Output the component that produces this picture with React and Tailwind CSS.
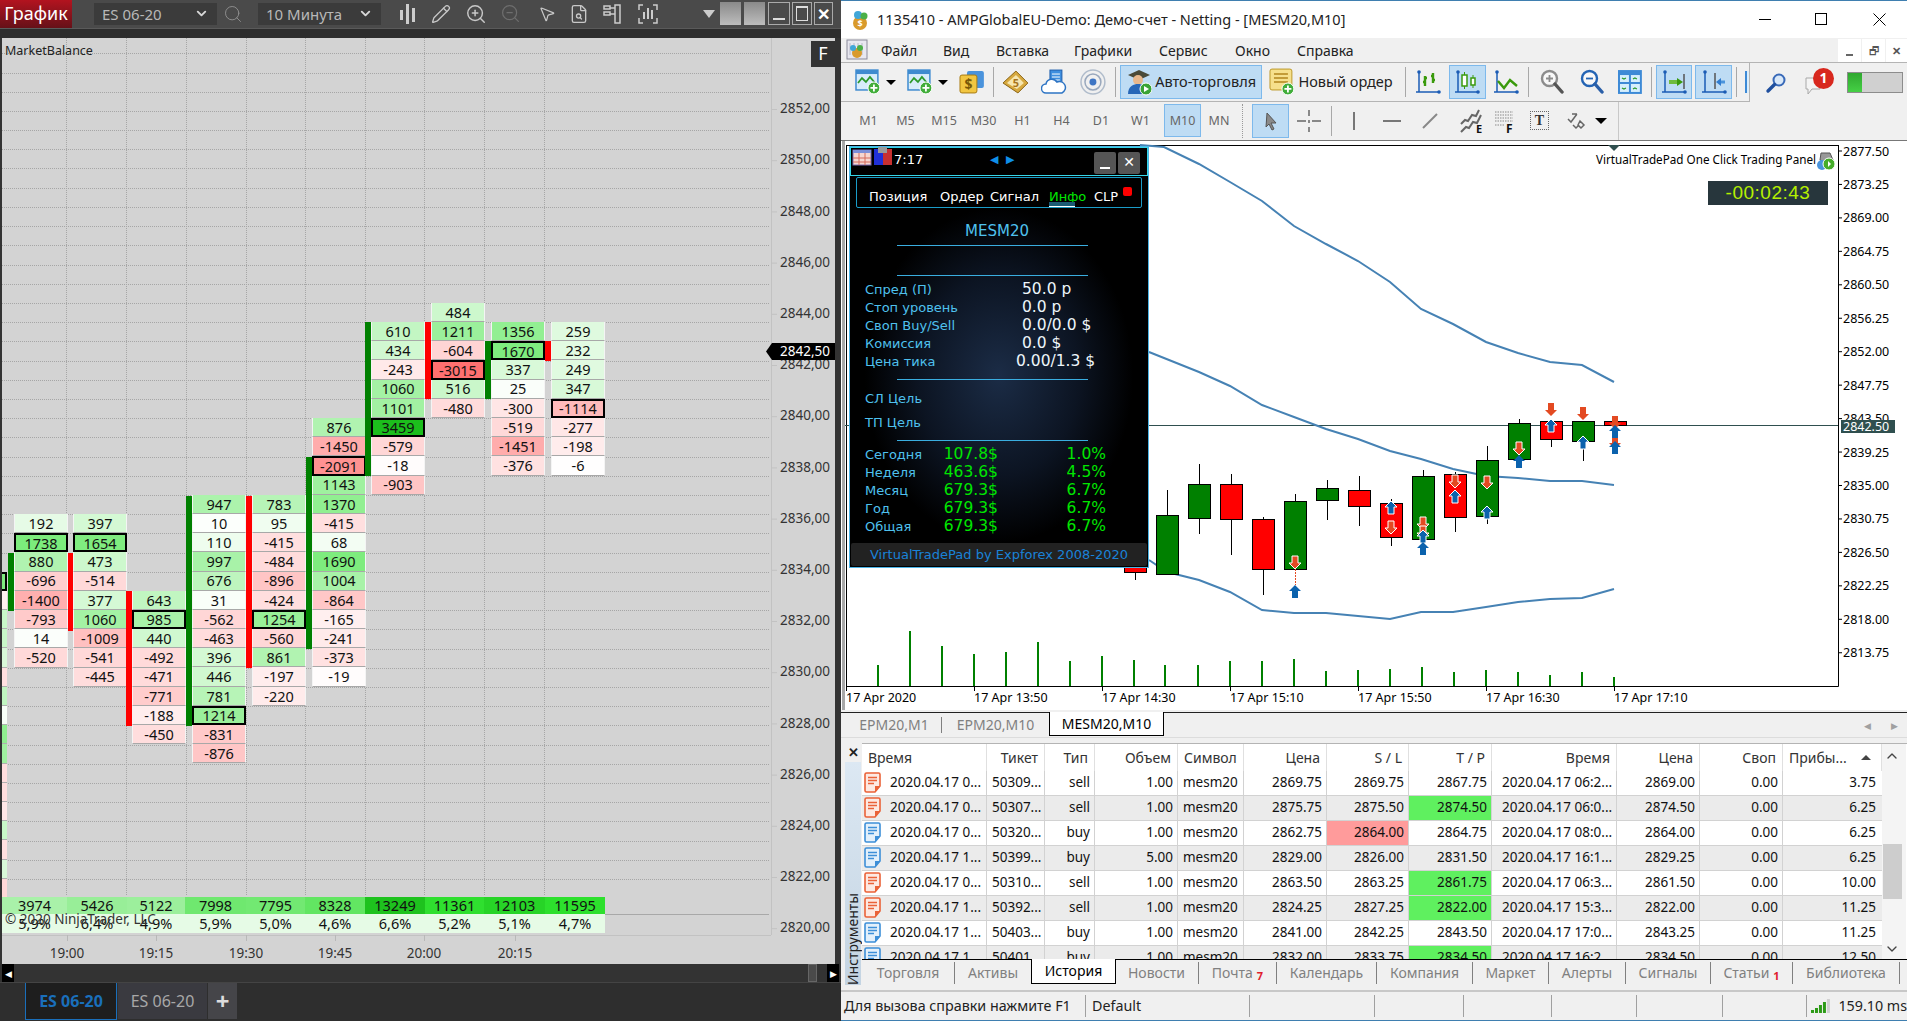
import { ChevronDown, ChevronUp, FileSearch, MousePointer2, Pencil, Search, ZoomIn, ZoomOut } from "lucide-react";

// ---------- data ----------
const footprint = [
  { x: 14, row: 11, bar: { x: 8, from: 553, to: 611, up: true }, cells: [192, 1738, 880, -696, -1400, -793, 14, -520], hi: 1 },
  { x: 73, row: 11, bar: { x: 68, from: 553, to: 631, up: false }, cells: [397, 1654, 473, -514, 377, 1060, -1009, -541, -445], hi: 1 },
  { x: 132, row: 15, bar: { x: 126, from: 591, to: 726, up: false }, cells: [643, 985, 440, -492, -471, -771, -188, -450], hi: 1 },
  { x: 192, row: 10, bar: { x: 186, from: 496, to: 726, up: true }, cells: [947, 10, 110, 997, 676, 31, -562, -463, 396, 446, 781, 1214, -831, -876], hi: 11 },
  { x: 252, row: 10, bar: { x: 246, from: 496, to: 668, up: false }, cells: [783, 95, -415, -484, -896, -424, 1254, -560, 861, -197, -220], hi: 6 },
  { x: 312, row: 6, bar: { x: 306, from: 457, to: 649, up: true }, cells: [876, -1450, -2091, 1143, 1370, -415, 68, 1690, 1004, -864, -165, -241, -373, -19], hi: 2 },
  { x: 371, row: 1, bar: { x: 365, from: 322, to: 476, up: true }, cells: [610, 434, -243, 1060, 1101, 3459, -579, -18, -903], hi: 5 },
  { x: 431, row: 0, bar: { x: 425, from: 322, to: 399, up: false }, cells: [484, 1211, -604, -3015, 516, -480], hi: 3 },
  { x: 491, row: 1, bar: { x: 485, from: 341, to: 399, up: true }, cells: [1356, 1670, 337, 25, -300, -519, -1451, -376], hi: 1 },
  { x: 551, row: 1, bar: { x: 545, from: 341, to: 361, up: false }, cells: [259, 232, 249, 347, -1114, -277, -198, -6], hi: 4 },
];

const edgeCells = ["#7eea7e", "#fff0f0", "#c8f7c8", "#c8f7c8", "#d8f8d8", "#ffe0e0", "#c0f5c0", "#f8fff8", "#90ee90", "#a0f0a0", "#ffdede", "#ffdede", "#ffe8e8", "#c8f7c8", "#ffe0e0", "#d8f8d8", "#ffd8d8"];

const volumes = [
  { w: 65, v: 3974, p: "5,9%", c: "#a9f1a9" },
  { w: 60, v: 5426, p: "6,4%", c: "#98ee98" },
  { w: 58, v: 5122, p: "4,9%", c: "#9cef9c" },
  { w: 61, v: 7998, p: "5,9%", c: "#6fe86f" },
  { w: 59, v: 7795, p: "5,0%", c: "#72e972" },
  { w: 60, v: 8328, p: "4,6%", c: "#62e662" },
  { w: 60, v: 13249, p: "6,6%", c: "#1ec21e" },
  { w: 59, v: 11361, p: "5,2%", c: "#2fdf2f" },
  { w: 61, v: 12103, p: "5,1%", c: "#27d427" },
  { w: 60, v: 11595, p: "4,7%", c: "#2de02d" },
];

const candles = [
  { x: 1135, top: 565, bot: 573, hi: 560, lo: 581, up: false },
  { x: 1167, top: 516, bot: 575, hi: 491, lo: 575, up: true },
  { x: 1199, top: 485, bot: 519, hi: 465, lo: 535, up: true },
  { x: 1231, top: 485, bot: 520, hi: 475, lo: 556, up: false },
  { x: 1263, top: 520, bot: 570, hi: 518, lo: 596, up: false },
  { x: 1295, top: 502, bot: 570, hi: 495, lo: 570, up: true },
  { x: 1327, top: 489, bot: 501, hi: 481, lo: 521, up: true },
  { x: 1359, top: 491, bot: 507, hi: 477, lo: 527, up: false },
  { x: 1391, top: 504, bot: 538, hi: 500, lo: 547, up: false },
  { x: 1423, top: 477, bot: 540, hi: 471, lo: 540, up: true },
  { x: 1455, top: 475, bot: 518, hi: 473, lo: 533, up: false },
  { x: 1487, top: 461, bot: 517, hi: 447, lo: 525, up: true },
  { x: 1519, top: 424, bot: 460, hi: 420, lo: 460, up: true },
  { x: 1551, top: 422, bot: 440, hi: 422, lo: 448, up: false },
  { x: 1583, top: 422, bot: 442, hi: 422, lo: 462, up: true },
  { x: 1615, top: 422, bot: 426, hi: 422, lo: 426, up: false },
];

const volumeBars = [[878, 666], [910, 632], [942, 647], [974, 655], [1006, 653], [1038, 643], [1070, 662], [1102, 657], [1134, 661], [1165, 666], [1198, 666], [1230, 662], [1262, 662], [1294, 660], [1326, 672], [1358, 671], [1390, 670], [1422, 668], [1454, 673], [1486, 671], [1518, 673], [1550, 676], [1582, 673], [1614, 678]];

const lineTop = "1140,146 1164,148 1199,165 1230,183 1262,202 1294,227 1326,245 1358,262 1390,283 1421,310 1453,325 1486,343 1518,354 1550,363 1582,366 1614,383";
const lineMid = "1149,353 1199,373 1230,387 1262,406 1294,418 1326,430 1358,440 1390,452 1421,460 1453,470 1486,477 1518,479 1550,482 1582,482 1614,486";
const lineLow = "1149,561 1167,573 1199,581 1230,593 1262,611 1294,614 1326,614 1358,617 1390,620 1421,613 1453,613 1486,608 1518,603 1550,600 1582,599 1614,590";

const downArrows = [[1295, 563, 1], [1391, 528, 1], [1423, 524, 1], [1423, 533, 1], [1455, 482, 1], [1487, 483, 1], [1519, 449, 1], [1551, 410, 0], [1583, 414, 0], [1615, 423, 0], [1615, 443, 0]];
const upArrows = [[1295, 593, 0], [1391, 509, 1], [1423, 538, 1], [1423, 550, 0], [1455, 498, 1], [1487, 514, 1], [1519, 463, 0], [1551, 427, 1], [1583, 444, 1], [1615, 433, 0], [1615, 449, 0]];

const columns = [
  ["Время", "l"], ["Тикет", "r"], ["Тип", "r"], ["Объем", "r"], ["Символ", "l"], ["Цена", "r"], ["S / L", "r"], ["T / P", "r"], ["Время", "r"], ["Цена", "r"], ["Своп", "r"], ["Прибы...", "l"],
];

const orders = [
  ["2020.04.17 0...", "50309...", "sell", "1.00", "2869.75", "2869.75", "2867.75", "2020.04.17 06:2...", "2869.00", "3.75"],
  ["2020.04.17 0...", "50307...", "sell", "1.00", "2875.75", "2875.50", "2874.50", "2020.04.17 06:0...", "2874.50", "6.25", "tp"],
  ["2020.04.17 0...", "50320...", "buy", "1.00", "2862.75", "2864.00", "2864.75", "2020.04.17 08:0...", "2864.00", "6.25", "sl"],
  ["2020.04.17 1...", "50399...", "buy", "5.00", "2829.00", "2826.00", "2831.50", "2020.04.17 16:1...", "2829.25", "6.25"],
  ["2020.04.17 0...", "50310...", "sell", "1.00", "2863.50", "2863.25", "2861.75", "2020.04.17 06:3...", "2861.50", "10.00", "tp"],
  ["2020.04.17 1...", "50392...", "sell", "1.00", "2824.25", "2827.25", "2822.00", "2020.04.17 15:3...", "2822.00", "11.25", "tp"],
  ["2020.04.17 1...", "50403...", "buy", "1.00", "2841.00", "2842.25", "2843.50", "2020.04.17 17:0...", "2843.25", "11.25"],
  ["2020.04.17 1...", "50401...", "buy", "1.00", "2832.00", "2833.75", "2834.50", "2020.04.17 16:2...", "2834.50", "12.50", "tp"],
];

const bottomTabs = [
  ["Торговля", 93], ["Активы", 77], ["История", 83, "active"], ["Новости", 84], ["Почта", 78, "7"], ["Календарь", 100], ["Компания", 96], ["Маркет", 76], ["Алерты", 77], ["Сигналы", 85], ["Статьи", 82, "1"], ["Библиотека", 107],
];

const timeframes = [["M1", 37], ["M5", 37], ["M15", 40], ["M30", 39], ["H1", 39], ["H4", 39], ["D1", 40], ["W1", 39]];

const menuItems = [["Файл", 62], ["Вид", 53], ["Вставка", 78], ["Графики", 85], ["Сервис", 76], ["Окно", 62], ["Справка", 70]];

function cellColor(v) {
  const a = Math.abs(v);
  if (v < 0) {
    const t = Math.pow(Math.min(a / 3015, 1), 0.75);
    const c = Math.round(255 - 143 * t);
    return `rgb(255,${c},${c})`;
  }
  if (a > 1800) {
    const t = Math.min((a - 1800) / 1660, 1);
    return `rgb(${Math.round(120 - 92 * t)},${Math.round(235 - 45 * t)},${Math.round(120 - 92 * t)})`;
  }
  const t = Math.pow(a / 1800, 0.75);
  const c = Math.round(255 - 135 * t);
  return `rgb(${c},${Math.round(255 - 20 * t)},${c})`;
}

// ---------- left: NinjaTrader ----------
function FootprintColumn({ col }) {
  return (
    <>
      <div
        className={`absolute w-[6px] ${col.bar.up ? "bg-[#008000]" : "bg-[#ff0000]"}`}
        style={{ left: col.bar.x - 2, top: col.bar.from - 38, height: col.bar.to - col.bar.from }}
      />
      <div className="absolute w-[54px] flex flex-col" style={{ left: col.x - 2, top: 264.9 + 19.2 * col.row }}>
        {col.cells.map((v, i) => (
          <div
            key={i}
            className={`h-[19.2px] flex items-center justify-center text-[14.5px] leading-none text-[#111] ${
              i === col.hi ? "border-2 border-black" : "border-b border-x border-x-[#f4f4f4] border-b-[#a8a8a8]"
            }`}
            style={{ backgroundColor: cellColor(v) }}
          >
            {v}
          </div>
        ))}
      </div>
    </>
  );
}

function NinjaChart() {
  const rows = [];
  for (let k = -13; k <= 30; k++) rows.push(302.9 + 19.2 * k);
  const prices = [];
  for (let p = 2852; p >= 2820; p -= 2) prices.push(p);
  const times = [["19:00", 67], ["19:15", 156], ["19:30", 246], ["19:45", 335], ["20:00", 424], ["20:15", 515]];
  return (
    <div className="relative h-[929px] bg-[#d3d3d3] ml-[2px] mr-[6px] overflow-hidden">
      <svg className="absolute inset-0 w-[833px] h-[929px]" viewBox="2 38 833 929">
        {rows.map((y) => (
          <line key={y} x1="2" x2="769" y1={Math.round(y) + 0.5} y2={Math.round(y) + 0.5} stroke="#a6a6a6" strokeDasharray="1 1" />
        ))}
        {[66, 126, 186, 246, 305, 365, 424, 484, 544].map((x) => (
          <line key={x} x1={x + 0.5} x2={x + 0.5} y1="38" y2="896" stroke="#a6a6a6" strokeDasharray="1 1" />
        ))}
        <line x1="771.5" x2="771.5" y1="38" y2="935" stroke="#c2c2c2" />
        <line x1="2" x2="771" y1="935.5" y2="935.5" stroke="#c2c2c2" />
        <line x1="605" x2="769" y1="914.5" y2="914.5" stroke="#a8a8a8" />
        {prices.map((p) => (
          <line key={p} x1="771" x2="777" y1={109.5 + 25.6 * (2852 - p)} y2={109.5 + 25.6 * (2852 - p)} stroke="#c2c2c2" />
        ))}
        {times.map(([t, x]) => (
          <line key={t} x1={x + 0.5} x2={x + 0.5} y1="935" y2="941" stroke="#b8b8b8" />
        ))}
      </svg>

      {edgeCells.map((c, i) => (
        <div
          key={i}
          className={`absolute left-0 w-[5px] h-[19.2px] ${i === 0 ? "border-y-2 border-r-2 border-black" : "border-b border-[#b0b0b0]"}`}
          style={{ top: 264.9 + 19.2 * (14 + i), backgroundColor: c }}
        />
      ))}

      {footprint.map((col) => (
        <FootprintColumn key={col.x} col={col} />
      ))}

      <div className="absolute left-0 top-[859px] flex text-[14.5px] text-[#111]">
        {volumes.map((c) => (
          <div key={c.v} className="flex flex-col" style={{ width: c.w }}>
            <div className="h-[17px] flex items-center justify-center leading-none" style={{ backgroundColor: c.c }}>
              {c.v}
            </div>
            <div className="h-[19px] flex items-center justify-center leading-none bg-[#e6fbe6]">{c.p}</div>
          </div>
        ))}
      </div>

      <div className="absolute left-[3px] top-[875px] text-[13.5px] leading-none text-[#333]">© 2020 NinjaTrader, LLC</div>
      <div className="absolute left-[3px] top-[7px] text-[12.5px] leading-none text-[#222]">MarketBalance</div>
      <div className="absolute left-[809px] top-[3px] w-[24px] h-[26px] bg-[#333] text-white text-[18px] flex items-center justify-center">F</div>

      {prices.map((p) => (
        <div
          key={p}
          className="absolute left-[778px] text-[13.5px] leading-none text-[#333]"
          style={{ top: 109.3 + 25.6 * (2852 - p) - 38 - 7 }}
        >
          {p},00
        </div>
      ))}

      <div className="absolute left-[764px] top-[305px] h-[17px] w-[69px] bg-black text-white text-[13.5px] leading-none flex items-center pl-[14px] [clip-path:polygon(6px_0,100%_0,100%_100%,6px_100%,0_50%)]">
        2842,50
      </div>

      {times.map(([t, x]) => (
        <div key={t} className="absolute w-[50px] -ml-[25px] text-center text-[13.5px] leading-none text-[#333] top-[909px]" style={{ left: x - 2 }}>
          {t}
        </div>
      ))}
    </div>
  );
}

function DarkSelect({ label }) {
  return (
    <div className="w-[123px] h-[22px] bg-[#3b3b3b] flex items-center justify-between pl-[8px] pr-[8px] text-[15px] text-[#b8b8b8]">
      <span>{label}</span>
      <ChevronDown size={15} strokeWidth={3} className="text-[#d8d8d8]" />
    </div>
  );
}

function NinjaToolbar() {
  return (
    <div className="h-[29px] flex items-center bg-[#4a4a4a] text-[#c8c8c8] border-b border-[#5a5a5a]">
      <div className="w-[72px] h-full bg-gradient-to-b from-[#b3131f] to-[#661018] text-white text-[18px] flex items-center justify-center">График</div>
      <div className="ml-[22px]"><DarkSelect label="ES 06-20" /></div>
      <Search size={20} strokeWidth={1} className="ml-[6px] text-[#999]" />
      <div className="ml-[15px]"><DarkSelect label="10 Минута" /></div>
      <svg className="ml-[17px]" width="20" height="24" viewBox="0 0 20 24" fill="#ccc">
        <rect x="2" y="8" width="3" height="10" />
        <rect x="8" y="2" width="3" height="20" />
        <rect x="14" y="6" width="3" height="14" />
      </svg>
      <Pencil size={20} strokeWidth={1.6} className="ml-[13px]" />
      <ZoomIn size={22} strokeWidth={1.6} className="ml-[14px]" />
      <ZoomOut size={21} strokeWidth={1.4} className="ml-[13px] text-[#6e6e6e]" />
      <MousePointer2 size={18} strokeWidth={1.6} className="ml-[17px]" />
      <FileSearch size={20} strokeWidth={1.6} className="ml-[13px]" />
      <svg className="ml-[14px]" width="20" height="20" viewBox="0 0 20 20" fill="none" stroke="#ccc" strokeWidth="1.5">
        <rect x="1" y="2" width="6" height="3" />
        <rect x="1" y="8" width="6" height="3" />
        <rect x="12" y="1" width="5" height="18" />
        <path d="M7 4h5M7 10h5" />
      </svg>
      <svg className="ml-[15px]" width="20" height="20" viewBox="0 0 20 20" fill="#ccc">
        <path d="M1 6V1h4M19 6V1h-4M1 14v5h4M19 14v5h-4" fill="none" stroke="#ccc" strokeWidth="1.5" />
        <rect x="5" y="8" width="2" height="7" />
        <rect x="9" y="4" width="2" height="11" />
        <rect x="13" y="6" width="2" height="9" />
      </svg>
      <div className="ml-[45px] w-0 h-0 border-x-[6px] border-x-transparent border-t-[8px] border-t-[#ccc]" />
      <div className="ml-[5px] w-[21px] h-[23px] bg-gradient-to-b from-[#8a8a8a] to-[#bdbdbd]" />
      <div className="ml-[3px] w-[21px] h-[23px] bg-gradient-to-b from-[#8a8a8a] to-[#bdbdbd]" />
      <div className="ml-[3px] w-[22px] h-[23px] border border-[#aaa] flex items-end justify-center pb-[4px]"><div className="w-[12px] h-[2px] bg-[#ddd]" /></div>
      <div className="ml-[2px] w-[20px] h-[23px] border border-[#aaa] p-[3px]"><div className="w-full h-full border border-[#ddd] border-t-2" /></div>
      <div className="ml-[2px] w-[19px] h-[23px] border border-[#aaa] text-white text-[16px] font-bold leading-none flex items-center justify-center">✕</div>
    </div>
  );
}

function NinjaPanel() {
  return (
    <div className="w-[841px] h-full flex flex-col bg-[#333]">
      <NinjaToolbar />
      <div className="h-[9px] bg-[#2d2d2d] shrink-0" />
      <NinjaChart />
      <div className="h-[19px] flex items-center justify-between px-[2px] border-b border-[#444]">
        <div className="w-[12px] h-[18px] bg-black text-white text-[9px] leading-none flex items-center justify-center">◀</div>
        <div className="flex items-center gap-[10px]">
          <div className="w-[9px] h-[18px] bg-[#4a4a4a] border border-[#666]" />
          <div className="w-[12px] h-[18px] bg-black text-white text-[9px] leading-none flex items-center justify-center">▶</div>
        </div>
      </div>
      <div className="flex-1 flex items-stretch pl-[25px] bg-[#2e2e2e] gap-[1px]">
        <div className="w-[92px] mb-[1px] flex items-center justify-center bg-[#1e1e1e] border-x border-b border-[#1a6fbb] text-[#1a6fbb] text-[16px] font-bold">ES 06-20</div>
        <div className="w-[89px] mb-[2px] flex items-center justify-center bg-[#3a3a40] text-[#a8a8a8] text-[16px]">ES 06-20</div>
        <div className="w-[29px] mb-[2px] flex items-center justify-center bg-[#454549] text-[#ddd] text-[24px] font-bold">+</div>
      </div>
    </div>
  );
}

// ---------- right: MetaTrader ----------
function Axes({ children, size = 26 }) {
  return (
    <svg width={size} height={size} viewBox="0 0 26 26" fill="none">
      <path d="M4 2v21M1 23h24" stroke="#1b5cb5" strokeWidth="1.5" />
      <circle cx="4" cy="3" r="1.8" fill="#1b5cb5" />
      <circle cx="24" cy="23" r="1.8" fill="#1b5cb5" />
      {children}
    </svg>
  );
}

const HollowBlueChart = ({ className = "" }) => (
  <svg className={className} width="26" height="26" viewBox="0 0 26 26" fill="none">
    <rect x="1" y="1" width="22" height="20" fill="#d8ecfb" stroke="#3f8bd0" strokeWidth="1.5" />
    <rect x="1" y="1" width="22" height="4" fill="#3f8bd0" />
    <path d="M3 14l4-5 4 4 4-5 6 7" stroke="#2c9a2c" strokeWidth="1.8" />
    <circle cx="19" cy="19" r="6" fill="#41ad3a" stroke="#fff" />
    <path d="M19 15.5v7M15.5 19h7" stroke="#fff" strokeWidth="1.8" />
  </svg>
);

const Caret = ({ className = "" }) => (
  <div className={`w-0 h-0 border-x-[5px] border-x-transparent border-t-[5px] border-t-black ${className}`} />
);

const Sep = ({ className = "" }) => <div className={`w-px h-[30px] bg-[#a8a8a8] ${className}`} />;

const Toggle = ({ className = "", children, w = 37 }) => (
  <div className={`h-[34px] bg-[#bedcf4] border border-[#7db9ec] flex items-center justify-center ${className}`} style={{ width: w }}>
    {children}
  </div>
);

function MagnifierIcon({ minus, blue }) {
  const ring = blue ? "#2464b4" : "#8c8c8c";
  return (
    <svg width="24" height="26" viewBox="0 0 24 26" fill="none">
      <circle cx="9.5" cy="9.5" r="7.5" fill="#f8f8f8" stroke={ring} strokeWidth="2.4" />
      <path d={minus ? "M6 9.5h7" : "M6 9.5h7M9.5 6v7"} stroke={ring} strokeWidth="1.8" />
      <path d="M15 15l7 8" stroke={blue ? "#2a5fa8" : "#555"} strokeWidth="3.4" strokeLinecap="round" />
    </svg>
  );
}

function MainToolbar() {
  return (
    <div className="h-[41px] flex items-center border-t border-[#b4b4b4] bg-[#f0f0f0]">
      <div className="w-[909px] h-full flex items-center border-b border-r border-[#b4b4b4] pl-[14px]">
        <HollowBlueChart />
        <Caret className="ml-[5px]" />
        <HollowBlueChart className="ml-[11px]" />
        <Caret className="ml-[5px]" />
        <svg className="ml-[11px]" width="26" height="26" viewBox="0 0 26 26">
          <rect x="8" y="2" width="17" height="17" rx="2" fill="#4a93dc" />
          <rect x="1" y="6" width="17" height="18" rx="2" fill="#f2c641" stroke="#a87b12" />
          <text x="9.5" y="20" textAnchor="middle" className="text-[14px] font-bold" fill="#7a5808">$</text>
        </svg>
        <Sep className="ml-[8px]" />
        <svg className="ml-[8px]" width="27" height="26" viewBox="0 0 27 26">
          <path d="M1 14L14 2l12 12-10 10z" fill="#d7a93f" stroke="#8a6413" />
          <path d="M5 14L14 6l8 8-7 6z" fill="#f7e7b0" />
          <text x="14" y="18" textAnchor="middle" className="text-[11px] font-bold" fill="#a8741a">5</text>
        </svg>
        <svg className="ml-[13px]" width="26" height="26" viewBox="0 0 26 26">
          <rect x="9" y="1" width="12" height="15" fill="#3f8fdf" stroke="#1d5dab" />
          <path d="M11 5h8M11 8h8M11 11h8" stroke="#fff" />
          <path d="M5 24a4.5 4.5 0 0 1 0-9 6 6 0 0 1 11-2 5.5 5.5 0 0 1 5 11z" fill="#fff" stroke="#2d74c4" strokeWidth="1.5" />
        </svg>
        <svg className="ml-[13px]" width="26" height="26" viewBox="0 0 26 26" fill="none">
          <circle cx="13" cy="13" r="12" stroke="#b0bccb" strokeWidth="1.5" />
          <circle cx="13" cy="13" r="8" stroke="#99a8bd" strokeWidth="1.5" />
          <circle cx="13" cy="13" r="3.5" fill="#3f76c4" />
        </svg>
        <Sep className="ml-[9px]" />
        <div className="ml-[4px] w-[142px] h-[34px] bg-[#bedcf4] border border-[#7db9ec] flex items-center pl-[5px] text-[14.5px] text-[#222] gap-[3px] whitespace-nowrap">
          <svg width="26" height="28" viewBox="0 0 26 28" className="shrink-0">
            <path d="M2 7l11-5 11 5-11 5z" fill="#4a4a38" />
            <circle cx="12" cy="12" r="5" fill="#e8b88c" />
            <path d="M2 26c0-8 6-10 10-10s9 2 10 10z" fill="#2767b8" />
            <circle cx="20" cy="21" r="6" fill="#3aa336" stroke="#fff" />
            <path d="M18 18l5 3-5 3z" fill="#fff" />
          </svg>
          <span>Авто-торговля</span>
        </div>
        <svg className="ml-[7px]" width="26" height="28" viewBox="0 0 26 28">
          <rect x="1" y="1" width="22" height="21" rx="2" fill="#f6e08c" stroke="#bc9828" />
          <path d="M5 6h14M5 10h14M5 14h14" stroke="#b3851c" strokeWidth="1.5" />
          <circle cx="19" cy="21" r="6" fill="#41ad3a" stroke="#fff" />
          <path d="M19 17.5v7M15.5 21h7" stroke="#fff" strokeWidth="1.8" />
        </svg>
        <span className="ml-[4px] text-[14.5px] text-[#222] whitespace-nowrap">Новый ордер</span>
        <Sep className="ml-[12px]" />
        <div className="ml-[9px]">
          <Axes><path d="M10 7v10M8 13h2M10 9h2M18 4v10M16 7h2M18 11h2" stroke="#3a9a0c" strokeWidth="2.4" /></Axes>
        </div>
        <Toggle className="ml-[8px]">
          <Axes><rect x="8" y="6" width="5" height="11" fill="#fff" stroke="#3a9a0c" strokeWidth="1.5" /><rect x="17" y="9" width="4" height="7" fill="#fff" stroke="#3a9a0c" strokeWidth="1.5" /><path d="M10.5 3v3M10.5 17v3M19 6v3M19 16v3" stroke="#3a9a0c" /></Axes>
        </Toggle>
        <div className="ml-[7px]">
          <Axes><path d="M5 12l6 7 6-8 7 6" stroke="#3a9a0c" strokeWidth="2.4" /></Axes>
        </div>
        <Sep className="ml-[9px]" />
        <div className="ml-[11px]"><MagnifierIcon /></div>
        <div className="ml-[16px]"><MagnifierIcon minus blue /></div>
        <svg className="ml-[13px]" width="26" height="26" viewBox="0 0 26 26">
          <rect x="1" y="1" width="24" height="24" fill="#3d8ad6" />
          <rect x="3" y="6" width="9" height="7" fill="#d5eefc" />
          <rect x="14" y="6" width="9" height="7" fill="#d5eefc" />
          <rect x="3" y="15" width="9" height="8" fill="#d5eefc" />
          <rect x="14" y="15" width="9" height="8" fill="#d5eefc" />
          <path d="M5 9l2 1 2-1M16 10l2-1 2 1M5 19l2 1 2-1M16 20l2-1 2 1" stroke="#2d9a2d" strokeWidth="1.3" fill="none" />
        </svg>
        <Sep className="ml-[9px]" />
        <Toggle className="ml-[4px]" w={36}>
          <Axes><path d="M8 13h10" stroke="#6fbb3e" strokeWidth="4" /><path d="M16 9l6 4-6 4z" fill="#3a9a0c" /><path d="M23 5v15" stroke="#555" strokeWidth="1.5" /></Axes>
        </Toggle>
        <Toggle className="ml-[3px]">
          <Axes><path d="M14 4v16" stroke="#555" strokeWidth="1.5" /><path d="M24 13h-5" stroke="#4a94dc" strokeWidth="3" /><path d="M20 9l-5 4 5 4z" fill="#2f7cd0" /></Axes>
        </Toggle>
        <Sep className="ml-[4px]" />
        <div className="ml-[8px] w-[4px] h-[22px] bg-[#dbeefc] border-l-2 border-[#3d8ad6]" />
      </div>
      <svg className="ml-[15px]" width="22" height="22" viewBox="0 0 22 22" fill="none">
        <circle cx="14" cy="8" r="5.5" fill="#d9e8f8" stroke="#3869b8" strokeWidth="2" />
        <path d="M9.5 12.5L3 19" stroke="#1f4f9e" strokeWidth="3.4" strokeLinecap="round" />
      </svg>
      <div className="relative ml-[17px] w-[30px] h-[30px]">
        <svg className="absolute left-0 top-[8px]" width="18" height="20" viewBox="0 0 18 20" fill="#f4f4f4" stroke="#a8a8a8">
          <path d="M2 2h14v11H8l-4 5v-5H2z" />
        </svg>
        <div className="absolute right-0 top-0 w-[21px] h-[21px] rounded-full bg-[#d8281e] text-white text-[14px] font-bold leading-none flex items-center justify-center">1</div>
      </div>
      <div className="ml-[13px] w-[56px] h-[21px] bg-[#d0d0d0] border border-[#8c8c8c]">
        <div className="w-[14px] h-full bg-gradient-to-b from-[#2fa82f] to-[#45d045]" />
      </div>
    </div>
  );
}

function PeriodToolbar() {
  return (
    <div className="h-[39px] flex items-center bg-[#f0f0f0] border-b border-[#777]">
      <div className="w-[778px] h-full flex items-center pl-[9px] border-r border-[#c8c8c8] text-[12.5px] text-[#666]">
        {timeframes.map(([t, w]) => (
          <div key={t} className="text-center" style={{ width: w }}>{t}</div>
        ))}
        <div className="ml-[4px] w-[37px] h-[33px] bg-[#bedcf4] border border-[#7db9ec] flex items-center justify-center">M10</div>
        <div className="w-[40px] text-center -ml-[2px]">MN</div>
        <div className="ml-[3px] w-px h-[34px] border-l border-dotted border-[#999]" />
        <Toggle className="ml-[9px]">
          <svg width="18" height="20" viewBox="0 0 18 20"><path d="M5 2l9 10h-5l3 6-2 1-3-6-3 3z" fill="#8a8a8a" stroke="#555" /></svg>
        </Toggle>
        <svg className="ml-[7px]" width="26" height="26" viewBox="0 0 26 26" stroke="#666" strokeWidth="1.5"><path d="M13 2v6M13 12v3M13 19v5M1 13h9M16 13h9" /></svg>
        <div className="ml-[9px] w-px h-[30px] bg-[#a8a8a8]" />
        <div className="ml-[21px] w-[2px] h-[18px] bg-[#777]" />
        <div className="ml-[28px] w-[18px] h-[2px] bg-[#777]" />
        <svg className="ml-[20px]" width="18" height="18" viewBox="0 0 18 18" stroke="#888" strokeWidth="2"><path d="M2 16L16 2" /></svg>
        <svg className="ml-[20px]" width="26" height="26" viewBox="0 0 26 26" fill="none" stroke="#666" strokeWidth="2">
          <path d="M2 24l5-5 3 1 4-6 4 1 4-8M2 16l4-4 3 1 4-6 4 1 3-6" />
          <text x="17" y="25" className="text-[11px] font-bold" stroke="none" fill="#111">E</text>
        </svg>
        <svg className="ml-[8px]" width="26" height="26" viewBox="0 0 26 26">
          <path d="M2 4h18M2 7h18M2 10h18M2 13h18" stroke="#888" strokeDasharray="1.5 1" fill="none" />
          <path d="M2 17h10" stroke="#888" strokeDasharray="1.5 1" />
          <text x="13" y="25" className="text-[12px] font-bold" fill="#111">F</text>
        </svg>
        <div className="ml-[11px] w-[19px] h-[19px] border border-dotted border-[#666] flex items-center justify-center text-[#333] text-[14px] font-bold font-['Liberation_Serif',serif]">T</div>
        <svg className="ml-[17px]" width="20" height="20" viewBox="0 0 20 20" fill="none" stroke="#666" strokeWidth="1.5"><path d="M2 8l3 3 6-8M6 3h5M7 14l3 3 2-2M14 10l4 4-3 3-3-3z" /></svg>
        <Caret className="ml-[9px] border-x-[6px] border-t-[6px]" />
      </div>
    </div>
  );
}

function Arrow({ x, y, up, outline }) {
  const s = up ? 1 : -1;
  const points = [[0, -7], [6, -1], [3, -1], [3, 6], [-3, 6], [-3, -1], [-6, -1]]
    .map(([dx, dy]) => `${x + dx},${y + dy * s}`)
    .join(" ");
  return <polygon points={points} fill={up ? "#0b62ad" : "#e34a22"} stroke={outline ? "#fff" : "none"} strokeWidth="1" />;
}

function TradeChart() {
  const priceTicks = ["2877.50", "2873.25", "2869.00", "2864.75", "2860.50", "2856.25", "2852.00", "2847.75", "2843.50", "2839.25", "2835.00", "2830.75", "2826.50", "2822.25", "2818.00", "2813.75"];
  const timeTicks = [["17 Apr 2020", 846], ["17 Apr 13:50", 974], ["17 Apr 14:30", 1102], ["17 Apr 15:10", 1230], ["17 Apr 15:50", 1358], ["17 Apr 16:30", 1486], ["17 Apr 17:10", 1614]];
  return (
    <svg className="absolute left-0 top-0 w-[1066px] h-[569px]" viewBox="841 142 1066 569">
      <rect x="842" y="142" width="3" height="569" fill="#a8a8a8" />
      <path d="M846.5 146V687.5H1838.5V146" fill="none" stroke="#000" />
      <path d="M846 146.5H1838" stroke="#000" />
      <line x1="845" x2="1838" y1="426.5" y2="426.5" stroke="#2f4f4f" />
      <polygon points="1608,146 1620,146 1614,152" fill="#2f4f4f" />
      {volumeBars.map(([x, y]) => (
        <rect key={x} x={x - 1} y={y} width="2" height={687 - y} fill="#008000" />
      ))}
      <polyline points={lineTop} fill="none" stroke="#4682b4" strokeWidth="2" />
      <polyline points={lineMid} fill="none" stroke="#4682b4" strokeWidth="2" />
      <polyline points={lineLow} fill="none" stroke="#4682b4" strokeWidth="2" />
      {candles.map((c) => (
        <g key={c.x}>
          <line x1={c.x + 0.5} x2={c.x + 0.5} y1={c.hi} y2={c.lo} stroke="#000" />
          <rect x={c.x - 11 + 0.5} y={c.top + 0.5} width="22" height={c.bot - c.top} fill={c.up ? "#008000" : "#ff0000"} stroke="#000" />
        </g>
      ))}
      <line x1="1295.5" x2="1295.5" y1="570" y2="586" stroke="#e34a22" strokeDasharray="2 1" />
      {downArrows.map(([x, y, o]) => <Arrow key={`d${x}${y}`} x={x} y={y} outline={o} />)}
      {upArrows.map(([x, y, o]) => <Arrow key={`u${x}${y}`} x={x} y={y} up outline={o} />)}
      {priceTicks.map((p, i) => (
        <g key={p}>
          <line x1="1838" x2="1842" y1={152 + 33.45 * i} y2={152 + 33.45 * i} stroke="#000" />
          <text x="1843" y={156.5 + 33.45 * i} className="text-[12.5px]" fill="#000">{p}</text>
        </g>
      ))}
      <rect x="1841" y="421" width="54" height="13" fill="#2f4f4f" />
      <text x="1843" y="432" className="text-[12.5px]" fill="#fff">2842.50</text>
      {timeTicks.map(([t, x]) => (
        <g key={t}>
          <line x1={x + 0.5} x2={x + 0.5} y1="687" y2="692" stroke="#000" />
          <text x={x} y="703" className="text-[12.5px]" fill="#000">{t}</text>
        </g>
      ))}
    </svg>
  );
}

function InfoRow({ label, value, valueLeft }) {
  return (
    <div className="flex h-[18px] items-center">
      <div className="w-[157px] text-[13px] text-[#4fc1ee]">{label}</div>
      <div className="text-[15.5px] text-[#eef6fb]" style={{ marginLeft: valueLeft }}>{value}</div>
    </div>
  );
}

function StatRow({ label, money, pct }) {
  return (
    <div className="flex h-[18px] items-center">
      <div className="w-[60px] text-[13px] text-[#4fc1ee]">{label}</div>
      <div className="w-[73px] text-right text-[15.5px] text-[#00e600]">{money}</div>
      <div className="w-[108px] text-right text-[15.5px] text-[#00e600]">{pct}</div>
    </div>
  );
}

function TradePad() {
  const rule = "h-px w-[191px] ml-[32px] bg-[#3aaee0]";
  return (
    <div className="absolute left-[8px] top-[5px] w-[300px] h-[422px] bg-black border border-[#4bb4e6] font-['DejaVu_Sans',sans-serif] flex flex-col">
      <div className="relative h-[29px] shrink-0 border border-[#35d6e8] flex items-center text-white text-[13px]">
        <svg className="absolute left-[1px] -top-[1px]" width="42" height="22" viewBox="0 0 42 22">
          <rect x="1" y="3" width="18" height="15" fill="#f5d6d0" stroke="#7b6bb0" />
          <rect x="1" y="3" width="18" height="3" fill="#7b8fd8" />
          <path d="M7 6v12M13 6v12M1 11h18M1 15h18" stroke="#d46a5a" />
          <rect x="22" y="2" width="9" height="16" fill="#2030d8" />
          <rect x="31" y="2" width="9" height="16" fill="#c83030" />
          <rect x="26" y="0" width="9" height="6" fill="#9a9a9a" />
        </svg>
        <span className="absolute left-[43px] top-[2px]">7:17</span>
        <span className="absolute left-[139px] top-[6px] text-[#0f8fe8] text-[11px] leading-none">◀</span>
        <span className="absolute left-[155px] top-[6px] text-[#0f8fe8] text-[11px] leading-none">▶</span>
        <div className="absolute left-[243px] top-[4px] w-[22px] h-[22px] rounded-[2px] bg-[#555] flex items-end justify-center pb-[5px]"><div className="w-[10px] h-[2px] bg-white" /></div>
        <div className="absolute left-[267px] top-[4px] w-[22px] h-[22px] rounded-[2px] bg-[#555] text-white text-[14px] font-bold flex items-center justify-center">✕</div>
      </div>
      <div className="relative h-[31px] mx-[6px] mt-[1px] shrink-0 border border-[#1a9cc8] rounded-[2px] text-[13px] text-white">
        <span className="absolute left-[12px] top-[9px]">Позиция</span>
        <span className="absolute left-[83px] top-[9px]">Ордер</span>
        <span className="absolute left-[133px] top-[9px]">Сигнал</span>
        <span className="absolute left-[192px] top-[9px] text-[#00e600]">Инфо</span>
        <div className="absolute left-[192px] bottom-0 w-[26px] h-[1px] bg-white" />
        <div className="absolute left-[192px] bottom-[1px] w-[26px] h-[4px] bg-[#1a5a74]" />
        <span className="absolute left-[237px] top-[9px]">CLP</span>
        <div className="absolute left-[266px] top-[9px] w-[9px] h-[9px] rounded-[2px] bg-[#ff0000]" />
      </div>
      <div className="flex-1 bg-[radial-gradient(ellipse_45%_50%_at_50%_50%,#1b2c46_0%,#0c1422_60%,#000_100%)] px-[15px] flex flex-col">
        <div className="text-center text-[15px] leading-none text-[#4fc1ee] mt-[16px] pr-[4px]">MESM20</div>
        <div className={`${rule} mt-[6px]`} />
        <div className={`${rule} mt-[29px]`} />
        <div className="mt-[5px] text-nowrap">
          <InfoRow label="Спред (П)" value="50.0 p" valueLeft="0px" />
          <InfoRow label="Стоп уровень" value="0.0 p" valueLeft="0px" />
          <InfoRow label="Своп Buy/Sell" value="0.0/0.0 $" valueLeft="0px" />
          <InfoRow label="Комиссия" value="0.0 $" valueLeft="0px" />
          <InfoRow label="Цена тика" value="0.00/1.3 $" valueLeft="-6px" />
        </div>
        <div className={`${rule} mt-[8px]`} />
        <div className="text-[13px] text-[#4fc1ee] mt-[10px] leading-[18px]">СЛ Цель</div>
        <div className="text-[13px] text-[#4fc1ee] mt-[6px] leading-[18px]">ТП Цель</div>
        <div className={`${rule} mt-[8px]`} />
        <div className="mt-[5px]">
          <StatRow label="Сегодня" money="107.8$" pct="1.0%" />
          <StatRow label="Неделя" money="463.6$" pct="4.5%" />
          <StatRow label="Месяц" money="679.3$" pct="6.7%" />
          <StatRow label="Год" money="679.3$" pct="6.7%" />
          <StatRow label="Общая" money="679.3$" pct="6.7%" />
        </div>
      </div>
      <div className="h-[23px] shrink-0 mx-[1px] mb-[1px] bg-[#222] rounded-[2px] text-center text-[13px] leading-[23px] text-[#1a82d8]">VirtualTradePad by Expforex 2008-2020</div>
    </div>
  );
}

function ChartArea() {
  return (
    <div className="relative h-[569px] bg-white overflow-hidden shrink-0">
      <TradeChart />
      <TradePad />
      <div className="absolute left-[755px] top-[13px] text-[11.7px] leading-none text-black whitespace-nowrap">VirtualTradePad One Click Trading Panel</div>
      <svg className="absolute left-[975px] top-[8px]" width="20" height="22" viewBox="0 0 20 22">
        <path d="M5 4h9l3 7-7 3-6-3z" fill="#999" stroke="#555" />
        <circle cx="6" cy="16" r="5" fill="#4a94dc" />
        <circle cx="13" cy="15" r="6" fill="#46ad2a" stroke="#fff" />
        <path d="M12 12v6l3-3z" fill="#fff" />
      </svg>
      <div className="absolute left-[867px] top-[40px] w-[120px] h-[24px] bg-[#27363c] text-[#b6f000] text-[19px] leading-none tracking-[0.5px] font-['Liberation_Sans',sans-serif] flex items-center justify-center">-00:02:43</div>
    </div>
  );
}

function ChartTabs() {
  return (
    <div className="h-[31px] mt-[2px] bg-[#f0f0f0] border-t border-[#222] shrink-0 flex items-start relative text-[14px] -mb-[2px]">
      <div className="w-[99px] ml-[2px] pl-[4px] mt-[4px] h-[16px] flex items-center justify-center text-[#808080] border-r border-[#808080]">EPM20,M1</div>
      <div className="w-[107px] mt-[4px] h-[16px] flex items-center justify-center text-[#808080]">EPM20,M10</div>
      <div className="w-[115px] h-[24px] -mt-px bg-white border-x border-b border-black flex items-center justify-center text-black">MESM20,M10</div>
      <div className="absolute right-[36px] top-[8px] text-[#a0a0a0] text-[9px] leading-none">◀</div>
      <div className="absolute right-[9px] top-[8px] text-[#a0a0a0] text-[9px] leading-none">▶</div>
      <div className="absolute left-0 right-0 top-[24px] h-px bg-[#dcdcdc]" />
    </div>
  );
}

function DocIcon({ sell }) {
  const c = sell ? "#ea6238" : "#3d8fd8";
  const f = sell ? "#fde9e2" : "#e3f0fb";
  return (
    <svg width="17" height="21" viewBox="0 0 17 21" className="shrink-0">
      <path d="M2.5 1h12a1.5 1.5 0 0 1 1.5 1.5V14l-5 6H2.5A1.5 1.5 0 0 1 1 18.5v-16A1.5 1.5 0 0 1 2.5 1z" fill={f} stroke={c} strokeWidth="1.6" />
      <path d="M4 5.5h9M4 8.5h9M4 11.5h6" stroke={c} strokeWidth="1.3" />
      <path d="M16 14h-5v6z" fill={c} />
    </svg>
  );
}

const tableGrid = "grid grid-cols-[125px_58px_50px_83px_66px_83px_82px_83px_125px_83px_83px_99px]";

function OrderRow({ row, index }) {
  const [time, ticket, type, vol, price, sl, tp, closeTime, close, profit, hit] = row;
  const cell = "h-[25px] border-r border-b border-[#d2d2d2] flex items-center justify-end pr-[4px] overflow-hidden whitespace-nowrap";
  const bg = index % 2 ? "bg-[#ebebeb]" : "bg-white";
  return (
    <div className={`${tableGrid} ${bg} text-[13.5px] text-[#111]`}>
      <div className={`${cell} !justify-start pl-[2px] gap-[9px]`}>
        <DocIcon sell={type === "sell"} />
        <span>{time}</span>
      </div>
      <div className={`${cell} !justify-start pl-[5px]`}>{ticket}</div>
      <div className={cell}>{type}</div>
      <div className={cell}>{vol}</div>
      <div className={`${cell} !justify-start pl-[5px]`}>mesm20</div>
      <div className={cell}>{price}</div>
      <div className={`${cell} ${hit === "sl" ? "bg-[#ff9b9b]" : ""}`}>{sl}</div>
      <div className={`${cell} ${hit === "tp" ? "bg-[#5ff05f]" : ""}`}>{tp}</div>
      <div className={`${cell} !justify-start pl-[10px]`}>{closeTime}</div>
      <div className={cell}>{close}</div>
      <div className={cell}>0.00</div>
      <div className={`${cell} border-r-0 pr-[6px]`}>{profit}</div>
    </div>
  );
}

function OrdersTable() {
  return (
    <div className="h-[216px] flex border-t border-[#b4b4b4] overflow-hidden bg-white">
      <div className="w-[1020px] overflow-hidden">
        <div className={`${tableGrid} h-[27px] text-[14px] text-[#333]`}>
          {columns.map(([name, align], i) => (
            <div
              key={i}
              className={`border-r border-[#e0e0e0] flex items-center overflow-hidden whitespace-nowrap ${align === "l" ? "justify-start pl-[6px]" : "justify-end pr-[6px]"}`}
            >
              {name}
              {i === 11 && <div className="ml-[14px] w-0 h-0 border-x-[5px] border-x-transparent border-b-[5px] border-b-[#444]" />}
            </div>
          ))}
        </div>
        {orders.map((row, i) => (
          <OrderRow key={i} row={row} index={i} />
        ))}
      </div>
      <div className="w-[24px] bg-[#f4f4f4] flex flex-col items-center relative">
        <ChevronUp size={16} strokeWidth={2} className="mt-[4px] -ml-[4px] text-[#444]" />
        <div className="absolute left-[1px] top-[100px] w-[19px] h-[55px] bg-[#cdcdcd]" />
        <ChevronDown size={16} strokeWidth={2} className="mt-auto mb-[2px] -ml-[4px] text-[#444]" />
      </div>
    </div>
  );
}

function BottomTabs() {
  return (
    <div className="h-[31px] bg-[#f0f0f0] flex items-start text-[14px] border-t border-black">
      {bottomTabs.map(([label, w, extra]) =>
        extra === "active" ? (
          <div key={label} className="h-[25px] -mt-px -mx-px bg-white border-x border-b border-black flex items-center justify-center text-black" style={{ width: w + 2 }}>
            {label}
          </div>
        ) : (
          <div key={label} className="h-[22px] mt-[2px] flex items-center justify-center text-[#808080] border-r border-[#808080]" style={{ width: w }}>
            <span>{label}</span>
            {extra && <span className="ml-[4px] mt-[6px] text-[11px] leading-none font-bold text-[#e0202c]">{extra}</span>}
          </div>
        )
      )}
    </div>
  );
}

function StatusBar() {
  const widths = [165, 125, 89, 89, 85, 86, 85];
  return (
    <div className="h-[31px] flex items-center bg-[#f0f0f0] border-t-2 border-[#c8c8c8] text-[14.3px] text-[#222]">
      <div className="w-[246px] h-[22px] pl-[3px] flex items-center border-r border-[#a0a0a0] whitespace-nowrap">Для вызова справки нажмите F1</div>
      {widths.map((w, i) => (
        <div key={i} className="h-[22px] pl-[6px] flex items-center border-r border-[#a0a0a0]" style={{ width: w }}>
          {i === 0 && "Default"}
        </div>
      ))}
      <svg className="ml-[4px]" width="20" height="16" viewBox="0 0 20 16" fill="#2c9a16">
        <rect x="0" y="12" width="3" height="3" />
        <rect x="4" y="10" width="3" height="5" />
        <rect x="8" y="7" width="3" height="8" />
        <rect x="12" y="4" width="3" height="11" />
        <rect x="16" y="1" width="3" height="14" fill="#d0d0d0" />
      </svg>
      <span className="ml-[7px] whitespace-nowrap">159.10 ms</span>
    </div>
  );
}

function MetaTraderWindow() {
  return (
    <div className="w-[1066px] h-full flex flex-col bg-[#f0f0f0] border-y border-[#3f7fb0] overflow-hidden">
      <div className="h-[37px] bg-white flex items-center relative shrink-0">
        <svg className="ml-[10px]" width="18" height="20" viewBox="0 0 18 20">
          <circle cx="9" cy="13" r="7" fill="#d99a2b" />
          <circle cx="7" cy="5" r="4" fill="#41a6d8" />
          <circle cx="13" cy="6" r="3.5" fill="#4bb048" />
          <text x="9" y="17" textAnchor="middle" className="text-[9px] font-bold" fill="#fff">$</text>
        </svg>
        <span className="ml-[8px] text-[14.5px] text-[#222] whitespace-nowrap">1135410 - AMPGlobalEU-Demo: Демо-счет - Netting - [MESM20,M10]</span>
        <div className="absolute left-[918px] top-[18px] w-[12px] h-px bg-black" />
        <div className="absolute left-[974px] top-[12px] w-[12px] h-[12px] border border-black" />
        <svg className="absolute left-[1032px] top-[12px]" width="13" height="13" viewBox="0 0 13 13" stroke="#000"><path d="M.5.5l12 12M12.5.5l-12 12" /></svg>
      </div>
      <div className="h-[24px] flex items-center text-[14px] text-[#222] relative shrink-0">
        <svg className="ml-[5px] mr-[13px]" width="22" height="22" viewBox="0 0 22 22">
          <rect x="1" y="1" width="20" height="19" fill="#e8e8f0" stroke="#8a8a9a" />
          <path d="M4 4v12M8 4v12M12 4v12M16 4v12" stroke="#b8b8c8" />
          <circle cx="11" cy="14" r="5" fill="#d99a2b" />
          <circle cx="7" cy="9" r="3" fill="#41a6d8" />
          <circle cx="14" cy="9" r="3" fill="#4bb048" />
        </svg>
        {menuItems.map(([label, w]) => (
          <div key={label} style={{ width: w }}>{label}</div>
        ))}
        <div className="ml-auto flex gap-[1px] text-[#555] text-[11px]">
          <div className="w-[23px] h-[23px] bg-white flex items-end justify-center pb-[6px]"><div className="w-[7px] h-[2px] bg-[#666]" /></div>
          <div className="w-[23px] h-[23px] bg-white flex items-center justify-center leading-none">🗗</div>
          <div className="w-[21px] h-[23px] bg-white flex items-center justify-center font-bold leading-none">✕</div>
        </div>
      </div>
      <MainToolbar />
      <PeriodToolbar />
      <ChartArea />
      <ChartTabs />
      <div className="h-[247px] flex shrink-0 mt-[2px]">
        <div className="w-[21px] flex flex-col pl-[4px] text-[#222]">
          <div className="h-[19px] w-[16px] flex items-center justify-center text-[13px] font-bold leading-none">✕</div>
          <div className="flex-1 w-[16px] bg-gradient-to-b from-[#dce8f3] to-[#c4d4e2] flex items-end justify-center">
            <span className="[writing-mode:vertical-rl] rotate-180 text-[14px] leading-none">Инструменты</span>
          </div>
          <div className="h-[5px]" />
        </div>
        <div className="flex-1 flex flex-col">
          <OrdersTable />
          <BottomTabs />
        </div>
      </div>
      <StatusBar />
    </div>
  );
}

export default function App() {
  return (
    <div className="w-[1907px] h-[1021px] flex overflow-hidden bg-[#333] font-['Noto_Sans',sans-serif]">
      <NinjaPanel />
      <MetaTraderWindow />
    </div>
  );
}
